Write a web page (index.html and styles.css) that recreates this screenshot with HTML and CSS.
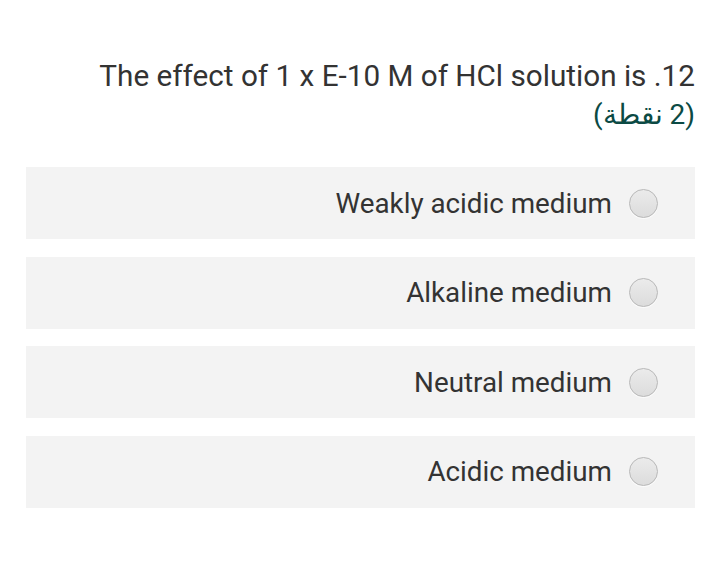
FILE: index.html
```html
<!DOCTYPE html>
<html lang="en">
<head>
    <meta charset="UTF-8">
    <title>Question 12</title>
    <link rel="stylesheet" href="styles.css">
</head>
<body>
    <div class="question">
        <div class="question-title">The effect of 1 x E-10 M of HCl solution is .12</div>
        <div class="points" dir="rtl">(2 نقطة)</div>
    </div>

    <!-- Options -->
    <div class="options">
        <label class="option">
            <span class="option-text">Weakly acidic medium</span>
            <span class="radio"></span>
        </label>
        <label class="option">
            <span class="option-text">Alkaline medium</span>
            <span class="radio"></span>
        </label>
        <label class="option">
            <span class="option-text">Neutral medium</span>
            <span class="radio"></span>
        </label>
        <label class="option">
            <span class="option-text">Acidic medium</span>
            <span class="radio"></span>
        </label>
    </div>
</body>
</html>
```

FILE: styles.css
```css
body {
    margin: 0;
    background: #fff;
    font-family: Roboto, "Noto Sans", Arial, sans-serif;
    color: #333;
    padding: 0 16px 0 26px;
}

.question {
    padding-top: 58px;
    text-align: right;
}

.question-title {
    font-size: 29.7px;
    line-height: 36px;
    color: #333;
}

.points {
    font-size: 28px;
    line-height: 38px;
    color: #0b4a44;
    margin-top: 2px;
}

/* Options */
.options {
    margin-top: 33px;
    display: flex;
    flex-direction: column;
    gap: 17.5px;
}

.option {
    display: flex;
    justify-content: flex-end;
    align-items: center;
    gap: 17px;
    height: 72px;
    background: #f3f3f3;
    padding-right: 37px;
}

.option-text {
    font-size: 27.8px;
    color: #333;
}

.radio {
    width: 27px;
    height: 27px;
    border-radius: 50%;
    border: 1px solid #b8b8b8;
    background: linear-gradient(#ebebeb, #dcdcdc);
    box-shadow: 0 1px 1px rgba(255, 255, 255, 0.8);
}
```
